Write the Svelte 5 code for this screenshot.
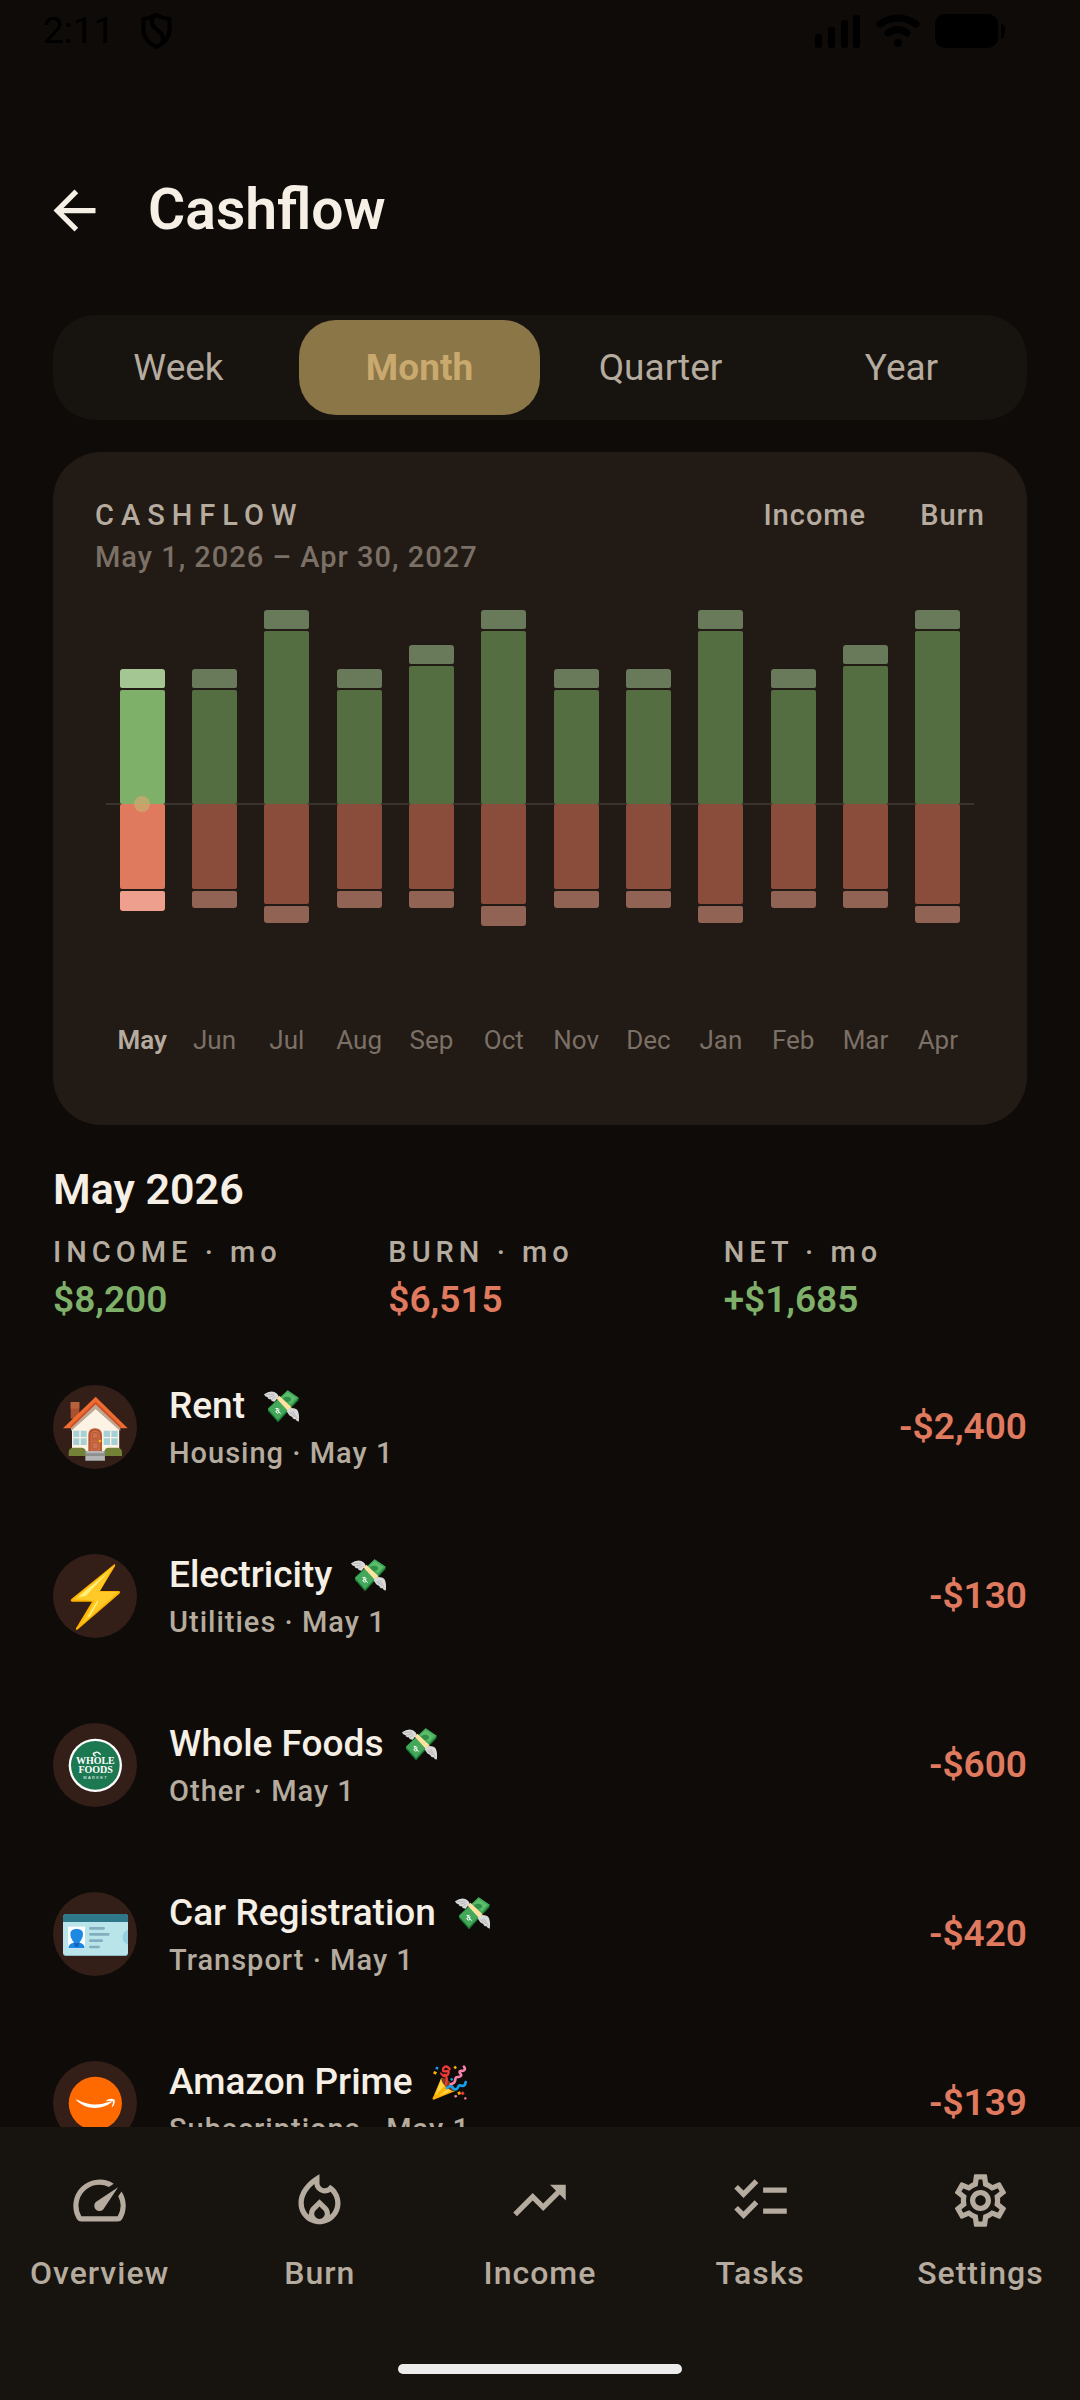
<script>
  const periods = ['Week', 'Month', 'Quarter', 'Year'];
  let period = $state('Month');

  // Bar segment lengths: recurring and one-off parts of income and burn.
  const months = [
    { name: 'May', income: 114, extra: 19, burn: 85, extraBurn: 20 },
    { name: 'Jun', income: 114, extra: 19, burn: 85, extraBurn: 17 },
    { name: 'Jul', income: 173, extra: 19, burn: 100, extraBurn: 17 },
    { name: 'Aug', income: 114, extra: 19, burn: 85, extraBurn: 17 },
    { name: 'Sep', income: 138, extra: 19, burn: 85, extraBurn: 17 },
    { name: 'Oct', income: 173, extra: 19, burn: 100, extraBurn: 20 },
    { name: 'Nov', income: 114, extra: 19, burn: 85, extraBurn: 17 },
    { name: 'Dec', income: 114, extra: 19, burn: 85, extraBurn: 17 },
    { name: 'Jan', income: 173, extra: 19, burn: 100, extraBurn: 17 },
    { name: 'Feb', income: 114, extra: 19, burn: 85, extraBurn: 17 },
    { name: 'Mar', income: 138, extra: 19, burn: 85, extraBurn: 17 },
    { name: 'Apr', income: 173, extra: 19, burn: 100, extraBurn: 17 }
  ];

  const stats = [
    { label: 'INCOME · mo', value: '$8,200', tone: 'good' },
    { label: 'BURN · mo', value: '$6,515', tone: 'bad' },
    { label: 'NET · mo', value: '+$1,685', tone: 'good' }
  ];

  const items = [
    { icon: 'house', name: 'Rent', mark: 'money', meta: 'Housing · May 1', amount: '-$2,400' },
    { icon: 'bolt', name: 'Electricity', mark: 'money', meta: 'Utilities · May 1', amount: '-$130' },
    { icon: 'market', name: 'Whole Foods', mark: 'money', meta: 'Other · May 1', amount: '-$600' },
    { icon: 'card', name: 'Car Registration', mark: 'money', meta: 'Transport · May 1', amount: '-$420' },
    { icon: 'prime', name: 'Amazon Prime', mark: 'party', meta: 'Subscriptions · May 1', amount: '-$139' }
  ];

  const tabs = [
    { name: 'Overview', d: 'M20.38 8.57l-1.23 1.85a8 8 0 0 1-.22 7.58H5.07A8 8 0 0 1 15.58 6.85l1.85-1.23A10 10 0 0 0 3.35 19a2 2 0 0 0 1.72 1h13.85a2 2 0 0 0 1.74-1 10 10 0 0 0-.27-10.44zM10.59 15.41a2 2 0 0 0 2.83 0l5.66-8.49-8.49 5.66a2 2 0 0 0 0 2.83z' },
    { name: 'Burn', d: 'M16 6l-.44.55C14.38 8.02 12 7.19 12 5.3V2S4 6 4 13c0 4.42 3.58 8 8 8s8-3.58 8-8c0-2.96-1.61-5.62-4-7zM12 19c-1.1 0-2-.87-2-1.94 0-.51.2-.99.58-1.36L12 14.3l1.43 1.4c.37.37.57.85.57 1.36 0 1.07-.9 1.94-2 1.94zm3.96-1.5c.04-.36.22-1.89-1.13-3.22L12 11.5l-2.83 2.78c-1.36 1.34-1.17 2.88-1.13 3.22C6.79 16.4 6 14.79 6 13c0-3.16 2.13-5.65 4.03-7.25.23 1.99 1.93 3.55 3.99 3.55.78 0 1.54-.23 2.18-.66C17.34 9.78 18 11.35 18 13c0 1.79-.79 3.4-2.04 4.5z' },
    { name: 'Income', d: 'M16 6l2.29 2.29-4.88 4.88-4-4L2 16.59 3.41 18l6-6 4 4 6.3-6.29L22 12V6z' },
    { name: 'Tasks', d: 'M22 7h-9v2h9V7zM22 15h-9v2h9v-2zM5.54 11L2 7.46l1.41-1.41 2.12 2.12 4.24-4.24 1.41 1.41L5.54 11zM5.54 19L2 15.46l1.41-1.41 2.12 2.12 4.24-4.24 1.41 1.41L5.54 19z' },
    { name: 'Settings', d: 'M19.43 12.98c.04-.32.07-.64.07-.98 0-.34-.03-.66-.07-.98l2.11-1.65c.19-.15.24-.42.12-.64l-2-3.46c-.09-.16-.26-.25-.44-.25-.06 0-.12.01-.17.03l-2.49 1c-.52-.4-1.08-.73-1.69-.98l-.38-2.65C14.46 2.18 14.25 2 14 2h-4c-.25 0-.46.18-.49.42l-.38 2.65c-.61.25-1.17.59-1.69.98l-2.49-1c-.06-.02-.12-.03-.18-.03-.17 0-.34.09-.43.25l-2 3.46c-.13.22-.07.49.12.64l2.11 1.65c-.04.32-.07.65-.07.98 0 .33.03.66.07.98l-2.11 1.65c-.19.15-.24.42-.12.64l2 3.46c.09.16.26.25.44.25.06 0 .12-.01.17-.03l2.49-1c.52.4 1.08.73 1.69.98l.38 2.65c.03.24.24.42.49.42h4c.25 0 .46-.18.49-.42l.38-2.65c.61-.25 1.17-.59 1.69-.98l2.49 1c.06.02.12.03.18.03.17 0 .34-.09.43-.25l2-3.46c.12-.22.07-.49-.12-.64l-2.11-1.65zm-1.98-1.71c.04.31.05.52.05.73 0 .21-.02.43-.05.73l-.14 1.13.89.7 1.08.84-.7 1.21-1.27-.51-1.04-.42-.9.68c-.43.32-.84.56-1.25.73l-1.06.43-.16 1.13-.2 1.35h-1.4l-.19-1.35-.16-1.13-1.06-.43c-.43-.18-.83-.41-1.23-.71l-.91-.7-1.06.43-1.27.51-.7-1.21 1.08-.84.89-.7-.14-1.13c-.03-.31-.05-.54-.05-.74s.02-.43.05-.73l.14-1.13-.89-.7-1.08-.84.7-1.21 1.27.51 1.04.42.9-.68c.43-.32.84-.56 1.25-.73l1.06-.43.16-1.13.2-1.35h1.39l.19 1.35.16 1.13 1.06.43c.43.18.83.41 1.23.71l.91.7 1.06-.43 1.27-.51.7 1.21-1.07.85-.89.7.14 1.13zM12 8c-2.21 0-4 1.79-4 4s1.79 4 4 4 4-1.79 4-4-1.79-4-4-4zm0 6c-1.1 0-2-.9-2-2s.9-2 2-2 2 .9 2 2-.9 2-2 2z' }
  ];
</script>

{#snippet avatar(kind)}
  <svg class="avatar" viewBox="0 0 252 252" aria-hidden="true">
    <circle cx="126" cy="126" r="126" fill="#331e18" />
    {#if kind === 'house'}
      <rect x="53" y="51" width="26" height="50" fill="#a9502f" />
      <rect x="53" y="51" width="26" height="20" fill="#b8613c" />
      <path d="M57 122L128 58l71 64v84H57z" fill="#bba995" />
      <path d="M57 134L128 72l70 62v76H57z" fill="#fdf3e4" />
      <path d="M54 124L128 55l74 69v14L128 71 54 138z" fill="#bba995" />
      <path d="M128 35L224 130h-21L128 58 53 130H30z" fill="#ef6c31" />
      <path d="M128 50L203 122v8L128 58 53 130v-8z" fill="#c9502a" />
      <path d="M61 137h40v43H61zM152 137h42v43h-42z" fill="#a6d0d8" />
      <path d="M81 137v43M61 158h40M173 137v43M152 158h42" stroke="#fdf3e4" stroke-width="4" />
      <path d="M106 200v-50q0-20 20-20t21 20v50z" fill="#b7562f" />
      <path d="M113 197v-45q0-15 13-15t14 15v45z" fill="#cd7150" />
      <path d="M113 165h27M118 150q0-8 8-8t9 8v10h-17zM118 172h17v20h-17z" fill="none" stroke="#b7562f" stroke-width="3" />
      <circle cx="141" cy="168" r="4" fill="#ffb300" />
      <path d="M47 213v-10q0-13 12-15h28q12 1 12 15v10zM154 213v-10q0-15 13-15h28q12 2 12 15v10z" fill="#748237" />
      <path d="M97 198h59v30H97z" fill="#8f8f8f" />
      <path d="M100 198h53v7h-53zM98 213h57v12H98z" fill="#b4b4b4" />
    {:else if kind === 'bolt'}
      <path d="M182 32Q188 27 186 37L141 111H198Q204 113 199 119L75 226Q68 231 69 223L117 143H57Q50 140 56 134z" fill="#ffb300" />
      <path d="M180 37L139 113 196 114 84 212 125 140 62 136z" fill="#ffca28" />
      <path d="M166 54L74 130 98 126zM134 139L104 188 109 189 135 145z" fill="#fff07a" />
    {:else if kind === 'market'}
      <circle cx="127" cy="127" r="80" fill="#fff" />
      <circle cx="127" cy="127" r="73" fill="#1b7850" />
      <g fill="#fff" text-anchor="middle">
        <text class="serif" x="127" y="123" font-size="30">WHOLE</text>
        <text class="serif" x="128" y="151" font-size="30">FOODS</text>
        <text class="sans" x="128" y="168" font-size="12">MARKET</text>
      </g>
      <path d="M127 99c-8-4-8-10-1-9 5-6 12-1 16 4" fill="none" stroke="#fff" stroke-width="4" stroke-linecap="round" />
    {:else if kind === 'card'}
      <rect x="30" y="66" width="195" height="126" rx="10" fill="#82aab5" />
      <path d="M30 90h195v91q0 9-10 9H40q-10 0-10-9z" fill="#b9e4ea" />
      <path d="M30 90V76q0-10 10-10h175q10 0 10 10v14z" fill="#2f7889" />
      <path d="M225 114a23 23 0 0 0 0 44z" fill="#94d1e0" />
      <rect x="45" y="104" width="51" height="67" fill="#fff" />
      <path d="M46 169q0-15 18-17-12-12-12-26 0-15 19-15t19 15q0 14-12 26 17 2 17 17z" fill="#1e88e5" />
      <path d="M62 150q9 8 18 0l-3 13-6 3-6-3z" fill="#1565c0" />
      <path d="M112 109h40M112 127h54M112 146h34M112 165h25" stroke="#82aec0" stroke-width="8" stroke-linecap="round" />
    {:else}
      <circle cx="127" cy="127" r="80" fill="#ff6a00" />
      <path d="M69 117q0-3 4-1 48 26 101 5 5-1 2 3-24 19-55 17-30-2-52-24z" fill="#fff" />
      <path d="M160 118q13-8 25-2 2 12-7 22-3 1-1-3 5-10 2-14-6-3-18 0z" fill="#fff" />
    {/if}
  </svg>
{/snippet}

{#snippet mark(kind)}
  {#if kind === 'money'}
    <svg class="mark" viewBox="0 0 105 105" aria-hidden="true">
      <path d="M71 4L104 26 103 34 42 100 12 66V58z" fill="#1b7d35" />
      <path d="M71 4L104 26 42 93 12 60z" fill="#43a85a" />
      <path d="M71 9L97 27 80 45 55 24z" fill="#5bbd69" />
      <ellipse cx="69" cy="31" rx="12" ry="8" fill="#2f8f47" />
      <path d="M37 28L46 20 82 54 74 68z" fill="#ffe1a0" />
      <path d="M74 68L82 54V63L75 74z" fill="#e2a610" />
      <path d="M36 59q8-3 9 3 0 5-5 3-6 0-4 4 3 6 11 1M35 57l15 17" fill="none" stroke="#fff" stroke-width="3" />
      <path d="M0 16Q17 4 31 9 45 16 43 24L32 38Q22 38 20 31 11 31 11 25 2 23 0 16z" fill="#dadada" />
      <path d="M5 17L30 15M13 25L31 20M22 32L34 24" stroke="#a9a9a9" stroke-width="2" />
      <path d="M68 66Q76 54 89 58 101 60 103 70 107 84 104 98 96 97 95 91 86 91 85 84 75 82 68 66z" fill="#dadada" />
      <path d="M86 66L100 90M81 69L92 84M76 70L84 79" stroke="#a9a9a9" stroke-width="2" />
    </svg>
  {:else}
    <svg class="mark" viewBox="0 0 105 105" aria-hidden="true">
      <path d="M28 38L70 78 5 104Q1 104 2 100z" fill="#ffb300" />
      <path d="M28 38L45 55 10 92zM52 66L62 76 20 94z" fill="#ffd54a" />
      <path d="M28 38Q42 37 57 54 71 69 69 78 56 81 40 64 26 48 28 38z" fill="#7c3c16" />
      <path d="M53 12Q43-1 35 8 29 21 42 19 54 15 48 28 38 38 31 29M42 58Q48 36 39 29" fill="none" stroke="#f23a3a" stroke-width="7" stroke-linecap="round" />
      <path d="M96 5Q103 15 92 18 80 16 84 25 93 33 80 36 69 35 70 44 69 55 56 58" fill="none" stroke="#f682ac" stroke-width="8" stroke-linecap="round" />
      <path d="M45 69Q56 58 64 70 72 78 78 67 80 59 89 62 99 65 101 51" fill="none" stroke="#12a2ef" stroke-width="8" stroke-linecap="round" />
      <path d="M7 18l8 4-4 7-8-4zM64 7l6-5 5 6-6 5zM76 82l8-3 3 8-8 3z" fill="#ffb300" />
      <path d="M12 5l7 1-1 8-8-2zM54 42l6-4 4 6-6 4z" fill="#12a2ef" />
      <path d="M86 84l7-5 5 7-7 5zM25 22l5 1-1 6-5-1z" fill="#f23a3a" />
      <path d="M66 92l7-3 3 6-7 3zM96 98l6-2 2 6-6 2z" fill="#f682ac" />
    </svg>
  {/if}
{/snippet}

<div class="screen">
  <div class="status">
    <div class="status-side">
      <span class="clock">2:11</span>
      <svg width="31" height="36" viewBox="0 0 31 36" aria-hidden="true">
        <path d="M15.5 2Q21 5 28.5 6V17Q28 28 15.5 34 3 28 2.5 17V6Q10 5 15.5 2zM12 4Q9 11 14 15L20 20Q24 25 20 31" fill="none" stroke="#000" stroke-width="4" stroke-linejoin="round" />
      </svg>
    </div>
    <div class="status-side status-right">
      <svg width="46" height="34" viewBox="0 0 46 34" aria-hidden="true">
        <rect x="0" y="20" width="7" height="14" rx="3" /><rect x="13" y="13" width="7" height="21" rx="3" /><rect x="26" y="6" width="7" height="28" rx="3" /><rect x="38" y="1" width="7" height="33" rx="3" />
      </svg>
      <svg width="44" height="34" viewBox="0 0 44 34" aria-hidden="true">
        <path d="M4 10Q22-2 40 10M12 19Q22 12 31 19" fill="none" stroke="#000" stroke-width="7" stroke-linecap="round" />
        <circle cx="22" cy="29" r="4" />
      </svg>
      <svg width="71" height="34" viewBox="0 0 71 34" aria-hidden="true">
        <rect width="63" height="34" rx="10" /><path d="M66 9q4 1 4 8t-4 8z" />
      </svg>
    </div>
  </div>

  <main>
    <header>
      <button class="back" aria-label="Back">
        <svg viewBox="0 0 24 24" aria-hidden="true"><path d="M20 11H7.83l5.59-5.59L12 4l-8 8 8 8 1.41-1.41L7.83 13H20z" /></svg>
      </button>
      <h1>Cashflow</h1>
    </header>

    <div class="periods" role="group" aria-label="Period">
      {#each periods as p}
        <button class:selected={period === p} aria-pressed={period === p} onclick={() => (period = p)}>{p}</button>
      {/each}
    </div>

    <section class="card">
      <div class="card-head">
        <div>
          <h2>CASHFLOW</h2>
          <p class="range">May 1, 2026 – Apr 30, 2027</p>
        </div>
        <div class="legend"><span>Income</span><span>Burn</span></div>
      </div>
      <div class="chart">
        {#each months as m, i}
          <div class="month" class:current={i === 0}>
            <div class="up">
              <i class="income-extra" style:height="{m.extra}px"></i>
              <i class="income" style:height="{m.income}px"></i>
            </div>
            <div class="down">
              <i class="burn" style:height="{m.burn}px"></i>
              <i class="burn-extra" style:height="{m.extraBurn}px"></i>
            </div>
            <span>{m.name}</span>
          </div>
        {/each}
      </div>
    </section>

    <section class="summary">
      <h2>May 2026</h2>
      <dl>
        {#each stats as s}
          <div><dt>{s.label}</dt><dd class={s.tone}>{s.value}</dd></div>
        {/each}
      </dl>
    </section>

    <ul>
      {#each items as item}
        <li>
          {@render avatar(item.icon)}
          <div class="entry">
            <div class="name"><span>{item.name}</span>{@render mark(item.mark)}</div>
            <div class="meta">{item.meta}</div>
          </div>
          <span class="amount">{item.amount}</span>
        </li>
      {/each}
    </ul>
  </main>

  <nav>
    <div class="tabs">
      {#each tabs as t}
        <a href="#{t.name.toLowerCase()}">
          <svg viewBox="0 0 24 24" aria-hidden="true"><path d={t.d} /></svg>
          <span>{t.name}</span>
        </a>
      {/each}
    </div>
    <div class="home"></div>
  </nav>
</div>

<style>
  :global(body) {
    margin: 0;
    background: #0e0b08;
  }
  .screen {
    height: 100vh;
    display: flex;
    flex-direction: column;
    background: #0e0b08;
    color: #f6efe5;
    font-family: Roboto, 'Liberation Sans', sans-serif;
    font-size: 37px;
    line-height: 52px;
  }
  h1, h2, p, dl, dd, ul {
    margin: 0;
    padding: 0;
  }
  button {
    border: 0;
    padding: 0;
    background: none;
    font: inherit;
    color: inherit;
  }
  svg {
    display: block;
    flex: none;
  }
  .status {
    display: flex;
    justify-content: space-between;
    align-items: center;
    height: 62px;
    padding: 0 74px 0 43px;
    color: #000;
  }
  .status-side {
    display: flex;
    align-items: center;
    gap: 27px;
  }
  .status-right {
    gap: 15px;
  }
  .clock {
    font-size: 37px;
  }
  main {
    flex: 1;
    min-height: 0;
    overflow-y: auto;
    scrollbar-width: none;
    padding: 106px 53px 0;
  }
  header {
    display: flex;
    align-items: center;
    gap: 42px;
    height: 84px;
    margin-left: -10px;
  }
  .back svg {
    width: 63px;
    height: 63px;
    fill: #f6efe5;
  }
  h1 {
    font-size: 57px;
    line-height: 74px;
    font-weight: 600;
  }
  .periods {
    display: grid;
    grid-template-columns: repeat(4, 1fr);
    margin-top: 63px;
    padding: 5px;
    border-radius: 42px;
    background: #17130f;
    color: #b5ab9e;
  }
  .periods button {
    height: 95px;
    border-radius: 37px;
  }
  .periods .selected {
    background: #8b7647;
    color: #c9a96e;
    font-weight: 700;
  }
  .card {
    margin-top: 32px;
    padding: 42px;
    border-radius: 48px;
    background: #221a15;
  }
  .card-head {
    display: flex;
    justify-content: space-between;
    font-size: 29px;
    line-height: 42px;
    font-weight: 500;
  }
  .card h2 {
    font-size: 29px;
    font-weight: 500;
    letter-spacing: 7px;
    color: #b5ab9e;
  }
  .range {
    letter-spacing: 1px;
    color: #7b7066;
  }
  .legend {
    display: flex;
    gap: 54px;
    letter-spacing: 1px;
    color: #b5ab9e;
  }
  .chart {
    position: relative;
    display: grid;
    grid-template-columns: repeat(12, 1fr);
    margin: 0 11px;
    padding-bottom: 22px;
  }
  .chart::before {
    content: '';
    position: absolute;
    left: 0;
    right: 0;
    top: 225px;
    height: 2px;
    background: #3a322c;
  }
  .month {
    position: relative;
    display: flex;
    flex-direction: column;
    align-items: center;
    font-size: 26px;
    line-height: 42px;
    color: #7b7066;
  }
  .up, .down {
    display: flex;
    flex-direction: column;
    gap: 2px;
    width: 45px;
  }
  .up {
    height: 226px;
    justify-content: flex-end;
  }
  .down {
    height: 215px;
  }
  .month i {
    flex: none;
    border-radius: 2px;
  }
  .month .income-extra { background: #687a59; border-radius: 3px 3px 2px 2px; }
  .income { background: #546e41; }
  .burn { background: #8a4d3b; }
  .month .burn-extra { background: #906354; border-radius: 2px 2px 3px 3px; }
  .current .income-extra { background: #a3c693; }
  .current .income { background: #7fb069; }
  .current .burn { background: #e07a5f; }
  .current .burn-extra { background: #ee9f8e; }
  .current span {
    font-weight: 600;
    color: #b5ab9e;
  }
  .current::after {
    content: '';
    position: absolute;
    top: 218px;
    width: 16px;
    height: 16px;
    border-radius: 8px;
    background: #c9a96ecc;
  }
  .summary {
    margin-top: 36px;
  }
  .summary h2 {
    font-size: 43px;
    line-height: 56px;
    font-weight: 600;
  }
  dl {
    display: grid;
    grid-template-columns: repeat(3, 1fr);
    gap: 32px;
    margin-top: 14px;
  }
  dt {
    margin-bottom: 1px;
    font-size: 29px;
    line-height: 42px;
    font-weight: 500;
    letter-spacing: 5px;
    color: #b5ab9e;
  }
  dd {
    font-weight: 600;
  }
  .good { color: #7fb069; }
  .bad, .amount { color: #e07a5f; }
  ul {
    list-style: none;
    display: flex;
    flex-direction: column;
    gap: 75px;
    margin-top: 54px;
  }
  li {
    display: flex;
    align-items: center;
    gap: 32px;
  }
  .avatar {
    width: 84px;
    height: 84px;
  }
  .serif {
    font-family: 'Liberation Serif', serif;
    font-weight: 700;
  }
  .sans {
    font-family: 'Liberation Sans', sans-serif;
    letter-spacing: 4px;
  }
  .entry {
    flex: 1;
  }
  .name {
    display: flex;
    align-items: center;
    gap: 19px;
    font-weight: 500;
  }
  .mark {
    width: 35px;
    height: 35px;
  }
  .meta {
    font-size: 29px;
    line-height: 42px;
    font-weight: 500;
    letter-spacing: 1px;
    color: #b5ab9e;
  }
  .amount {
    font-weight: 600;
  }
  nav {
    padding: 42px 0 26px;
    background: #17130f;
  }
  .tabs {
    display: grid;
    grid-template-columns: repeat(5, 1fr);
    gap: 21px;
  }
  .tabs a {
    display: flex;
    flex-direction: column;
    align-items: center;
    gap: 20px;
    color: #b5ab9e;
    font-size: 32px;
    line-height: 42px;
    font-weight: 500;
    letter-spacing: 1px;
    text-decoration: none;
  }
  .tabs svg {
    width: 63px;
    height: 63px;
    fill: currentColor;
  }
  .home {
    width: 284px;
    height: 10px;
    margin: 70px auto 0;
    border-radius: 5px;
    background: #ececec;
  }
</style>
